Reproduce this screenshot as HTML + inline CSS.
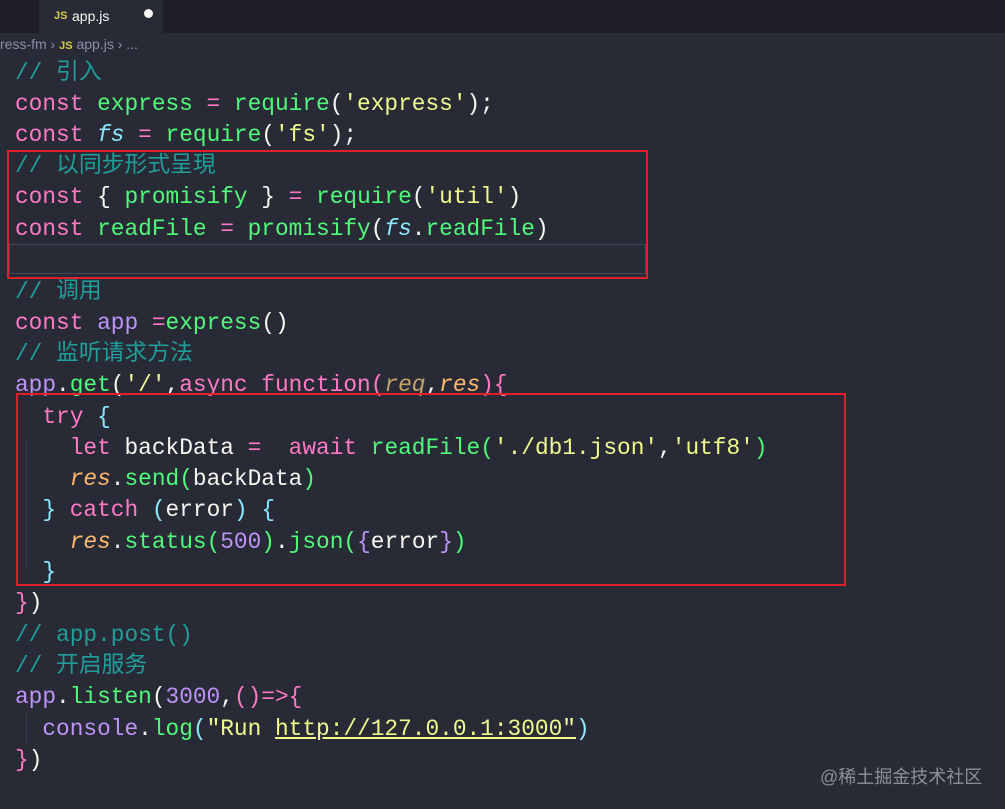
<!DOCTYPE html>
<html><head><meta charset="utf-8"><style>
body{margin:0;width:1005px;height:809px;background:#282a36;overflow:hidden;position:relative;font-family:"Liberation Mono","Noto Sans CJK SC",monospace;}
.tabbar{position:absolute;left:0;top:0;width:1005px;height:33px;background:#1e1f29;}
.tab{position:absolute;left:39px;top:0;width:124px;height:33px;background:#282a36;font-family:"Liberation Sans",sans-serif;color:#f8f8f2;font-size:14px;}
.crumb{position:absolute;left:0;top:36px;font-family:"Liberation Sans",sans-serif;font-size:14px;color:#8a8ea8;}
.js{color:#d9c94a;font-weight:bold;font-size:11px;}
.l{position:absolute;left:15px;font-size:22.8px;white-space:pre;color:#f8f8f2;line-height:31px;}
.k{color:#ff79c6}.g{color:#50fa7b}.c{color:#1f9e9a}.p{color:#bd93f9}.y{color:#f1fa8c}.o{color:#ffb86c;font-style:italic}.b{color:#8be9fd}.w{color:#f8f8f2}.i{font-style:italic}
.box{position:absolute;border:2px solid #e0212b;}
.guide{position:absolute;width:1px;background:#3b3e4c;}
</style></head><body>
<div class="tabbar"><div class="tab"><span class="js" style="position:absolute;left:15px;top:10px">JS</span><span style="position:absolute;left:33px;top:8px">app.js</span><span style="position:absolute;left:105px;top:9px;width:9px;height:9px;border-radius:50%;background:#f8f8f2"></span></div></div>
<div class="crumb">ress-fm &#8250; <span class="js">JS</span> app.js &#8250; ...</div>
<div class="guide" style="left:26px;top:440px;height:130px"></div>
<div class="guide" style="left:26px;top:714px;height:31px"></div>
<div class="l" style="top:58px"><span class="c">// 引入</span></div>
<div class="l" style="top:89px"><span class="k">const</span> <span class="g">express</span> <span class="k">=</span> <span class="g">require</span><span class="w">(</span><span class="y">'express'</span><span class="w">);</span></div>
<div class="l" style="top:120px"><span class="k">const</span> <span class="b i">fs</span> <span class="k">=</span> <span class="g">require</span><span class="w">(</span><span class="y">'fs'</span><span class="w">);</span></div>
<div class="l" style="top:151px"><span class="c">// 以同步形式呈現</span></div>
<div class="l" style="top:182px"><span class="k">const</span> <span class="w">{</span> <span class="g">promisify</span> <span class="w">}</span> <span class="k">=</span> <span class="g">require</span><span class="w">(</span><span class="y">'util'</span><span class="w">)</span></div>
<div class="l" style="top:214px"><span class="k">const</span> <span class="g">readFile</span> <span class="k">=</span> <span class="g">promisify</span><span class="w">(</span><span class="b i">fs</span><span class="w">.</span><span class="g">readFile</span><span class="w">)</span></div>
<div style="position:absolute;left:9px;top:244px;width:635px;height:28px;border:1px solid #44475a"></div>
<div class="l" style="top:277px"><span class="c">// 调用</span></div>
<div class="l" style="top:308px"><span class="k">const</span> <span class="p">app</span> <span class="k">=</span><span class="g">express</span><span class="w">()</span></div>
<div class="l" style="top:339px"><span class="c">// 监听请求方法</span></div>
<div class="l" style="top:370px"><span class="p">app</span><span class="w">.</span><span class="g">get</span><span class="w">(</span><span class="y">'/'</span><span class="w">,</span><span class="k">async</span> <span class="k">function</span><span class="k">(</span><span class="o" style="color:#c4a36b">req</span><span class="w">,</span><span class="o">res</span><span class="k">){</span></div>
<div class="l" style="top:402px">  <span class="k">try</span> <span class="b">{</span></div>
<div class="l" style="top:433px">    <span class="k">let</span> <span class="w">backData</span> <span class="k">=</span>  <span class="k">await</span> <span class="g">readFile</span><span class="g">(</span><span class="y">'./db1.json'</span><span class="w">,</span><span class="y">'utf8'</span><span class="g">)</span></div>
<div class="l" style="top:464px">    <span class="o">res</span><span class="w">.</span><span class="g">send</span><span class="g">(</span><span class="w">backData</span><span class="g">)</span></div>
<div class="l" style="top:495px">  <span class="b">}</span> <span class="k">catch</span> <span class="b">(</span><span class="w">error</span><span class="b">)</span> <span class="b">{</span></div>
<div class="l" style="top:527px">    <span class="o">res</span><span class="w">.</span><span class="g">status</span><span class="g">(</span><span class="p">500</span><span class="g">)</span><span class="w">.</span><span class="g">json</span><span class="g">(</span><span class="p">{</span><span class="w">error</span><span class="p">}</span><span class="g">)</span></div>
<div class="l" style="top:557px">  <span class="b">}</span></div>
<div class="l" style="top:588px"><span class="k">}</span><span class="w">)</span></div>
<div class="l" style="top:620px"><span class="c">// app.post()</span></div>
<div class="l" style="top:651px"><span class="c">// 开启服务</span></div>
<div class="l" style="top:682px"><span class="p">app</span><span class="w">.</span><span class="g">listen</span><span class="w">(</span><span class="p">3000</span><span class="w">,</span><span class="k">()=&gt;{</span></div>
<div class="l" style="top:714px">  <span class="p">console</span><span class="w">.</span><span class="g">log</span><span class="b">(</span><span class="y">"Run <span style="text-decoration:underline">http://127.0.0.1:3000"</span></span><span class="b">)</span></div>
<div class="l" style="top:745px"><span class="k">}</span><span class="w">)</span></div>
<div class="box" style="left:7px;top:150px;width:637px;height:125px"></div>
<div class="box" style="left:16px;top:393px;width:826px;height:189px"></div>
<div style="position:absolute;left:820px;top:763px;font-family:'Liberation Sans','Noto Sans CJK SC',sans-serif;font-size:18px;color:#8d8f98">@稀土掘金技术社区</div>
</body></html>
